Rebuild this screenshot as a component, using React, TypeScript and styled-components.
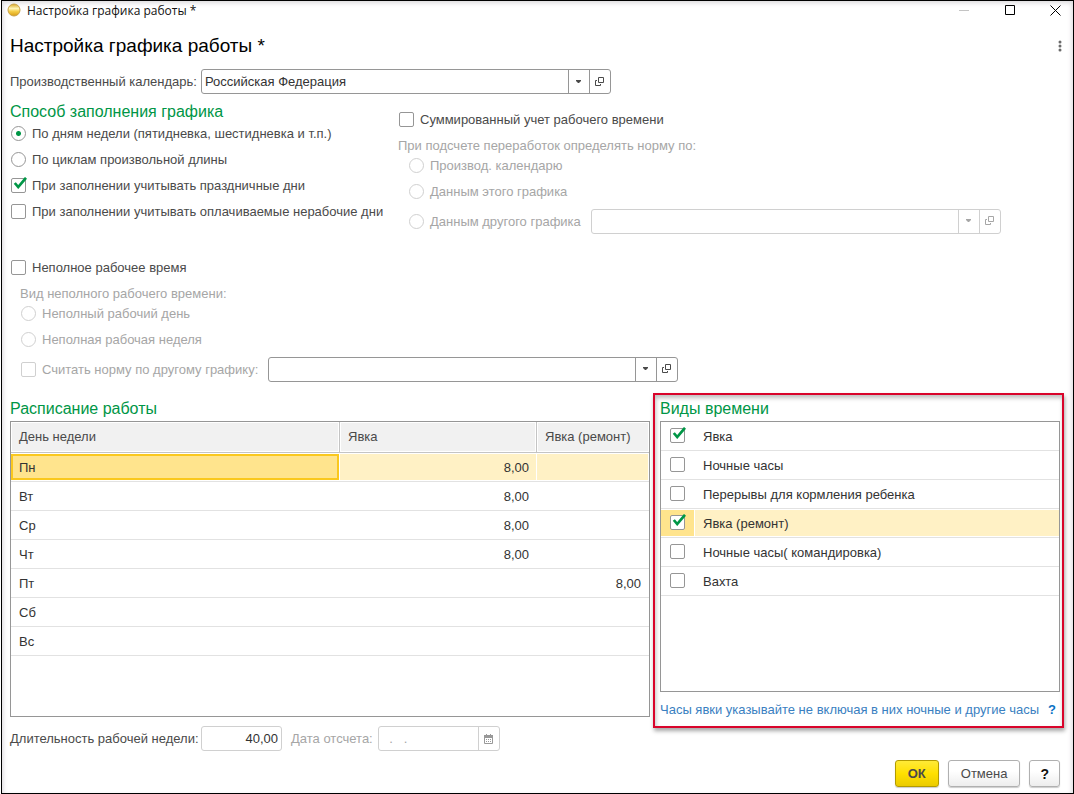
import React, { useId, useState } from "react";
import styled, { createGlobalStyle, css } from "styled-components";

const GlobalStyle = createGlobalStyle`
  *, *::before, *::after { box-sizing: border-box; }
  body {
    margin: 0;
    background: #fff;
    font-family: "Liberation Sans", Arial, sans-serif;
    font-size: 13px;
    color: #4a4a4a;
  }
  input, button { font: inherit; color: inherit; }
`;

const Window = styled.div`
  display: flex;
  flex-direction: column;
  min-height: 100vh;
  margin-left: 1px;
  border: 1px solid #000;
  background: #fff;
  box-shadow: inset 0 4px 5px -2px #dcdadd, inset -4px 0 5px -3px #dcdadd, inset 4px 0 5px -3px #dcdadd;
`;

const TitleBar = styled.header`
  display: flex;
  align-items: center;
  height: 18px;
  padding: 0 9px 0 5px;
  font-family: "Open Sans", "Noto Sans", sans-serif;
  font-size: 12px;
  color: #111;
`;

const TitleText = styled.span`
  flex: 1;
  padding-left: 6px;
`;

const CaptionButton = styled.button`
  display: flex;
  align-items: center;
  justify-content: center;
  width: 46px;
  height: 18px;
  padding: 0;
  border: 0;
  background: none;
  &:last-child { width: 17px; margin-left: 14px; }
`;

const Content = styled.main`
  flex: 1;
  padding: 12px 8px 6px;
`;

const PageHeader = styled.div`
  display: flex;
  align-items: center;
  justify-content: space-between;
  height: 30px;
  margin-bottom: 8px;
`;

const PageTitle = styled.h1`
  margin: 0;
  font-size: 19px;
  font-weight: 400;
  color: #000;
`;

const MoreButton = styled.button`
  display: flex;
  width: 10px;
  height: 20px;
  padding: 0;
  border: 0;
  background: none;
  align-items: center;
  justify-content: center;
`;

const FormRow = styled.div`
  display: flex;
  align-items: center;
`;

const FieldLabel = styled.label<{ $width?: number; $muted?: boolean }>`
  flex: none;
  width: ${(p) => (p.$width ? `${p.$width}px` : "auto")};
  color: ${(p) => (p.$muted ? "#a6a6a6" : "inherit")};
  white-space: nowrap;
`;

const FieldBox = styled.div<{ $width: number; $soft?: boolean }>`
  display: flex;
  width: ${(p) => p.$width}px;
  height: 25px;
  border: 1px solid ${(p) => (p.$soft ? "#d0d0d0" : "#969696")};
  border-radius: 3px;
  background: #fff;
  color: ${(p) => (p.$soft ? "#a6a6a6" : "#4a4a4a")};
`;

const TextInput = styled.input<{ $align?: "right" }>`
  flex: 1;
  min-width: 0;
  padding: 0 3px;
  border: 0;
  outline: 0;
  background: none;
  color: #333;
  text-align: ${(p) => p.$align ?? "left"};
  &:disabled { color: #a6a6a6; }
`;

const FieldButton = styled.button`
  display: flex;
  align-items: center;
  justify-content: center;
  flex: none;
  width: 21px;
  padding: 0;
  border: 0;
  border-left: 1px solid #969696;
  background: none;
  &:disabled { border-color: #d0d0d0; }
`;

const SectionTitle = styled.h2`
  margin: 0;
  font-size: 16px;
  line-height: 20px;
  font-weight: 400;
  color: #009646;
`;

const Options = styled.div`
  display: grid;
  grid-template-columns: 388px minmax(0, 1fr);
  margin: 8px 0 16px;
`;

const OptionColumn = styled.div<{ $offset?: boolean }>`
  padding-top: ${(p) => (p.$offset ? 4 : 0)}px;
`;

const OptionList = styled.div`
  margin-top: -2px;
`;

const Indented = styled.div`
  padding-left: 10px;
`;

const GroupCaption = styled.div`
  height: 20px;
  padding-top: 7px;
  line-height: 14px;
  color: #a6a6a6;
`;

const ChoiceLabel = styled.label<{ $muted?: boolean }>`
  display: flex;
  align-items: center;
  gap: 6px;
  height: 26px;
  padding-left: 1px;
  color: ${(p) => (p.$muted ? "#a6a6a6" : "#4a4a4a")};
  white-space: nowrap;
`;

const ChoiceRow = styled.div`
  display: flex;
  align-items: center;
  gap: 10px;
  height: 34px;
`;

const markBase = css`
  appearance: none;
  display: block;
  width: 15px;
  height: 15px;
  margin: 0;
  border: 1px solid #969696;
  background: #fff;
  &:disabled { border-color: #d0d0d0; }
`;

const RadioInput = styled.input`
  ${markBase}
  flex: none;
  border-radius: 50%;
  &:checked { background: radial-gradient(circle, #009646 0 2px, #fff 3px); }
`;

const CheckInput = styled.input`
  ${markBase}
  border-radius: 2px;
  & + svg { display: none; }
  &:checked + svg { display: block; }
`;

const CheckHolder = styled.span`
  position: relative;
  flex: none;
  width: 15px;
  height: 15px;
  svg {
    position: absolute;
    left: 2px;
    top: -1px;
    pointer-events: none;
  }
`;

const Panels = styled.div`
  display: grid;
  grid-template-columns: minmax(0, 1fr) 411px;
  gap: 3px;
  align-items: start;
  margin: 7px 1px 9px 0;
`;

const SchedulePanel = styled.section`
  padding-top: 6px;
`;

const KindsPanel = styled.section`
  padding: 4px 2px 0 5px;
  border: 2px solid #d9042b;
  box-shadow: 1px 3px 4px rgba(0, 0, 0, 0.35), inset 1px 3px 4px rgba(0, 0, 0, 0.25);
`;

const Frame = styled.div<{ $height: number }>`
  min-height: ${(p) => p.$height}px;
  margin-top: 2px;
  border: 1px solid #969696;
  background: #fff;
`;

const Table = styled.table`
  width: 100%;
  border-collapse: separate;
  border-spacing: 0;
  table-layout: fixed;
  color: #333;
`;

const HeadCell = styled.th`
  height: 31px;
  padding: 0 8px 2px;
  border-bottom: 1px solid #c4c4c4;
  border-right: 1px solid #c4c4c4;
  background: #f1f1f1;
  box-shadow: inset 0 0 0 1px #fff;
  color: #4a4a4a;
  font-weight: 400;
  text-align: left;
  &:last-child { border-right: 0; }
`;

const Cell = styled.td<{ $tone?: "row" | "current"; $number?: boolean }>`
  height: 29px;
  padding: 0 8px;
  border-bottom: 1px solid #e2e2e2;
  text-align: ${(p) => (p.$number ? "right" : "left")};
  ${(p) =>
    p.$tone === "row" &&
    css`
      background: #fff1c5;
      box-shadow: inset 0 1px #fff, inset 0 -1px #fff, inset -1px 0 #fff;
    `}
  ${(p) =>
    p.$tone === "current" &&
    css`
      background: #ffe48d;
      box-shadow: inset 0 1px #fff, inset 0 -1px #fff, inset -1px 0 #fff,
        inset 0 3px #fac81e, inset 0 -3px #fac81e, inset -3px 0 #fac81e, inset 2px 0 #fac81e;
    `}
`;

const KindRow = styled.label<{ $active: boolean }>`
  display: grid;
  grid-template-columns: 33px minmax(0, 1fr);
  gap: 1px;
  height: 29px;
  padding: 1px 0;
  border-bottom: 1px solid #e2e2e2;
  color: #333;
  & > * { background: ${(p) => (p.$active ? "#fff1c5" : "none")}; }
  & > :first-child { background: ${(p) => (p.$active ? "#ffe48d" : "none")}; }
`;

const KindMark = styled.span`
  padding: 5px 9px;
  display: block;
  & > span { display: block; }
`;

const KindName = styled.span`
  display: flex;
  align-items: center;
  padding-left: 8px;
`;

const Hint = styled.div`
  display: flex;
  align-items: center;
  justify-content: space-between;
  height: 34px;
  padding-right: 4px;
  color: #3a7fc1;
  white-space: nowrap;
`;

const HelpLink = styled.a`
  color: #0a72c4;
  font-weight: 700;
  text-decoration: none;
`;

const Summary = styled.div`
  display: flex;
  align-items: center;
  margin-top: 9px;
`;

const StartDate = styled.div`
  display: flex;
  align-items: center;
  margin-left: 9px;
`;

const Actions = styled.footer`
  display: flex;
  justify-content: flex-end;
  gap: 9px;
  padding-right: 5px;
`;

const ActionButton = styled.button<{ $primary?: boolean; $strong?: boolean }>`
  height: 27px;
  padding: 0 ${(p) => (p.$strong && !p.$primary ? 10 : 12)}px;
  border: 1px solid ${(p) => (p.$primary ? "#b39b00" : "#b0b0b0")};
  border-radius: 3px;
  background: ${(p) =>
    p.$primary ? "linear-gradient(#ffea38, #ffe000 50%, #ebcb00)" : "linear-gradient(#fff 40%, #ededed)"};
  box-shadow: 0 1px 1px rgba(0, 0, 0, 0.2);
  color: ${(p) => (p.$strong && !p.$primary ? "#111" : "#4a4a4a")};
  font-size: ${(p) => (p.$strong && !p.$primary ? 14 : 13)}px;
  font-weight: ${(p) => (p.$strong ? 700 : 400)};
`;

const ArrowIcon = () => (
  <svg width="6" height="4" viewBox="0 0 6 4" aria-hidden="true">
    <path d="M0 0h5v1L3 3H2L0 1z" fill="currentColor" />
  </svg>
);

const OpenIcon = () => (
  <svg width="10" height="10" viewBox="0 0 10 10" fill="none" stroke="currentColor" aria-hidden="true">
    <path d="M3.5.5h5v5h-5zM2 3.5H.5v5h5V7" />
  </svg>
);

const CalendarIcon = () => (
  <svg width="10" height="10" viewBox="0 0 10 10" aria-hidden="true">
    <path d="M.5 1.5h8v8h-8z" fill="none" stroke="#999" />
    <path d="M0 1h9v3H0zM2 0h1v2H2zM6 0h1v2H6zM2 5h1v1H2zM4 5h1v1H4zM6 5h1v1H6zM2 7h1v1H2zM4 7h1v1H4zM6 7h1v1H6z" fill="#999" />
  </svg>
);

const AppIcon = () => (
  <svg width="14" height="14" viewBox="0 0 14 14" aria-hidden="true">
    <defs>
      <linearGradient id="coin" x1="0" y1="0" x2="0" y2="1">
        <stop offset="0" stopColor="#d9a520" />
        <stop offset=".38" stopColor="#fff6b8" />
        <stop offset=".6" stopColor="#f6cf4a" />
        <stop offset="1" stopColor="#d89c12" />
      </linearGradient>
    </defs>
    <circle cx="7" cy="7" r="6" fill="url(#coin)" stroke="#c9a24a" />
  </svg>
);

function Radio({ name, label, checked, disabled, onSelect }: {
  name: string; label: string; checked?: boolean; disabled?: boolean; onSelect?: () => void;
}) {
  return (
    <ChoiceLabel $muted={disabled}>
      <RadioInput type="radio" name={name} checked={!!checked} disabled={disabled} onChange={() => onSelect?.()} />
      {label}
    </ChoiceLabel>
  );
}

function CheckMark({ initial, disabled }: { initial?: boolean; disabled?: boolean }) {
  return (
    <CheckHolder>
      <CheckInput type="checkbox" defaultChecked={initial} disabled={disabled} />
      <svg width="14" height="12" viewBox="0 0 14 12" aria-hidden="true">
        <path d="m1.8 6 3.4 4L13 .8" fill="none" stroke="#009646" strokeWidth="2.7" />
      </svg>
    </CheckHolder>
  );
}

function Check({ label, initial, disabled }: { label: string; initial?: boolean; disabled?: boolean }) {
  return (
    <ChoiceLabel $muted={disabled}>
      <CheckMark initial={initial} disabled={disabled} />
      {label}
    </ChoiceLabel>
  );
}

function Lookup({ id, label, value = "", disabled }: {
  id?: string; label?: string; value?: string; disabled?: boolean;
}) {
  return (
    <FieldBox $width={410} $soft={disabled}>
      <TextInput id={id} aria-label={label} defaultValue={value} disabled={disabled} />
      <FieldButton type="button" aria-label="Выбрать" disabled={disabled}><ArrowIcon /></FieldButton>
      <FieldButton type="button" aria-label="Открыть" disabled={disabled}><OpenIcon /></FieldButton>
    </FieldBox>
  );
}

const days = [
  ["Пн", "8,00", ""],
  ["Вт", "8,00", ""],
  ["Ср", "8,00", ""],
  ["Чт", "8,00", ""],
  ["Пт", "", "8,00"],
  ["Сб", "", ""],
  ["Вс", "", ""],
];

const kinds = [
  { name: "Явка", on: true },
  { name: "Ночные часы", on: false },
  { name: "Перерывы для кормления ребенка", on: false },
  { name: "Явка (ремонт)", on: true },
  { name: "Ночные часы( командировка)", on: false },
  { name: "Вахта", on: false },
];

export default function App() {
  const id = useId();
  const [mode, setMode] = useState(0);

  return (
    <>
      <GlobalStyle />
      <Window>
        <TitleBar>
          <AppIcon />
          <TitleText>Настройка графика работы *</TitleText>
          <CaptionButton type="button" aria-label="Свернуть">
            <svg width="10" height="10" viewBox="0 0 10 10"><path d="M0 5.5h10" stroke="#c4c4c4" /></svg>
          </CaptionButton>
          <CaptionButton type="button" aria-label="Развернуть">
            <svg width="10" height="10" viewBox="0 0 10 10"><path d="M.5.5h9v9h-9z" fill="none" stroke="#000" /></svg>
          </CaptionButton>
          <CaptionButton type="button" aria-label="Закрыть">
            <svg width="11" height="11" viewBox="0 0 11 11"><path d="m.5.5 10 10m0-10-10 10" stroke="#000" /></svg>
          </CaptionButton>
        </TitleBar>

        <Content>
          <PageHeader>
            <PageTitle>Настройка графика работы *</PageTitle>
            <MoreButton type="button" aria-label="Ещё">
              <svg width="4" height="12" viewBox="0 0 4 12" fill="#6a6a6a">
                <circle cx="2" cy="2" r="1.5" /><circle cx="2" cy="6" r="1.5" /><circle cx="2" cy="10" r="1.5" />
              </svg>
            </MoreButton>
          </PageHeader>

          <FormRow>
            <FieldLabel $width={191} htmlFor={`${id}calendar`}>Производственный календарь:</FieldLabel>
            <Lookup id={`${id}calendar`} value="Российская Федерация" />
          </FormRow>

          <Options>
            <OptionColumn>
              <SectionTitle>Способ заполнения графика</SectionTitle>
              <OptionList>
                <Radio name="mode" label="По дням недели (пятидневка, шестидневка и т.п.)" checked={mode === 0} onSelect={() => setMode(0)} />
                <Radio name="mode" label="По циклам произвольной длины" checked={mode === 1} onSelect={() => setMode(1)} />
                <Check label="При заполнении учитывать праздничные дни" initial />
                <Check label="При заполнении учитывать оплачиваемые нерабочие дни" />
              </OptionList>
            </OptionColumn>
            <OptionColumn $offset>
              <Check label="Суммированный учет рабочего времени" />
              <GroupCaption>При подсчете переработок определять норму по:</GroupCaption>
              <Indented>
                <Radio name="norm" label="Производ. календарю" disabled />
                <Radio name="norm" label="Данным этого графика" disabled />
                <ChoiceRow>
                  <Radio name="norm" label="Данным другого графика" disabled />
                  <Lookup label="Другой график" disabled />
                </ChoiceRow>
              </Indented>
            </OptionColumn>
          </Options>

          <Check label="Неполное рабочее время" />
          <Indented>
            <GroupCaption>Вид неполного рабочего времени:</GroupCaption>
            <Radio name="part" label="Неполный рабочий день" disabled />
            <Radio name="part" label="Неполная рабочая неделя" disabled />
            <ChoiceRow>
              <Check label="Считать норму по другому графику:" disabled />
              <Lookup label="График для расчета нормы" />
            </ChoiceRow>
          </Indented>

          <Panels>
            <SchedulePanel>
              <SectionTitle>Расписание работы</SectionTitle>
              <Frame $height={296}>
                <Table>
                  <colgroup>
                    <col />
                    <col width="197" />
                    <col width="112" />
                  </colgroup>
                  <thead>
                    <tr>
                      <HeadCell scope="col">День недели</HeadCell>
                      <HeadCell scope="col">Явка</HeadCell>
                      <HeadCell scope="col">Явка (ремонт)</HeadCell>
                    </tr>
                  </thead>
                  <tbody>
                    {days.map(([day, work, repair], i) => (
                      <tr key={day}>
                        <Cell $tone={i === 0 ? "current" : undefined}>{day}</Cell>
                        <Cell $number $tone={i === 0 ? "row" : undefined}>{work}</Cell>
                        <Cell $number $tone={i === 0 ? "row" : undefined}>{repair}</Cell>
                      </tr>
                    ))}
                  </tbody>
                </Table>
              </Frame>
              <Summary>
                <FieldLabel $width={191} htmlFor={`${id}week`}>Длительность рабочей недели:</FieldLabel>
                <FieldBox $width={81} $soft>
                  <TextInput id={`${id}week`} $align="right" defaultValue="40,00" />
                </FieldBox>
                <StartDate>
                  <FieldLabel $width={87} $muted htmlFor={`${id}start`}>Дата отсчета:</FieldLabel>
                  <FieldBox $width={122} $soft>
                    <TextInput id={`${id}start`} defaultValue="  .   ." disabled />
                    <FieldButton type="button" aria-label="Календарь" disabled><CalendarIcon /></FieldButton>
                  </FieldBox>
                </StartDate>
              </Summary>
            </SchedulePanel>

            <KindsPanel>
              <SectionTitle>Виды времени</SectionTitle>
              <Frame $height={271}>
                {kinds.map((kind, i) => (
                  <KindRow key={kind.name} $active={i === 3}>
                    <KindMark><CheckMark initial={kind.on} /></KindMark>
                    <KindName>{kind.name}</KindName>
                  </KindRow>
                ))}
              </Frame>
              <Hint>
                Часы явки указывайте не включая в них ночные и другие часы
                <HelpLink href="#help" aria-label="Справка">?</HelpLink>
              </Hint>
            </KindsPanel>
          </Panels>

          <Actions>
            <ActionButton type="button" $primary $strong>ОК</ActionButton>
            <ActionButton type="button">Отмена</ActionButton>
            <ActionButton type="button" $strong>?</ActionButton>
          </Actions>
        </Content>
      </Window>
    </>
  );
}
